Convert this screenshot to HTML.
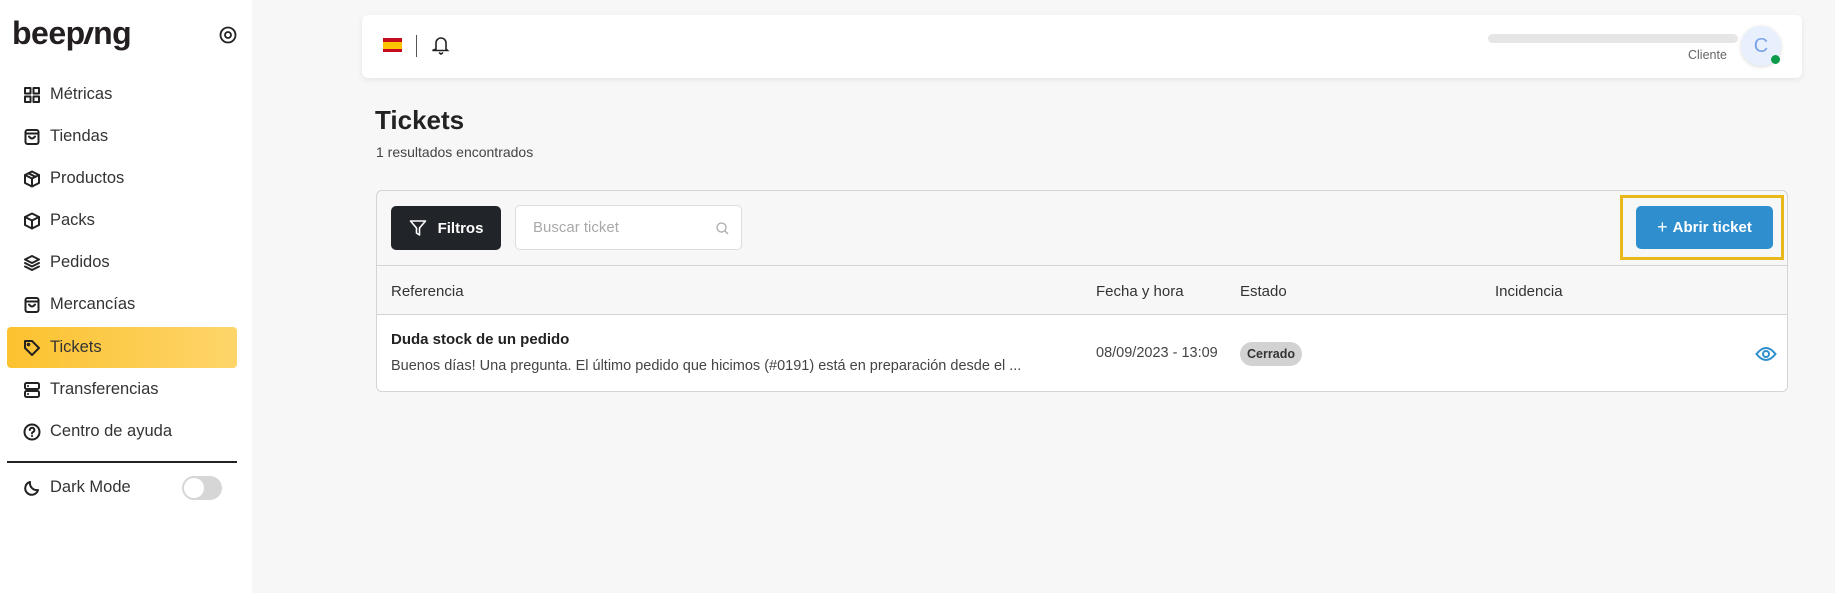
<!DOCTYPE html>
<html><head><meta charset="utf-8"><style>
*{box-sizing:border-box;margin:0;padding:0}
body{width:1835px;height:593px;background:#f7f7f7;font-family:"Liberation Sans",sans-serif;color:#222;position:relative;overflow:hidden}
.sb{position:absolute;left:0;top:0;width:252px;height:593px;background:#fff}
.logo{position:absolute;left:12px;top:15px;font-size:32px;font-weight:bold;color:#231f20;letter-spacing:-0.5px}
.logo i{display:inline-block;transform:skewX(-20deg);font-style:normal}
.item{position:absolute;left:7px;width:230px;height:41px;display:flex;align-items:center;padding-left:16px;font-size:16.5px;color:#333}
.item svg{width:18px;height:18px;margin-right:9px;fill:none;stroke:#222;stroke-width:2;stroke-linecap:round;stroke-linejoin:round}
.act{background:linear-gradient(90deg,#fcc22f,#fdd56a);border-radius:4px}
.hdr{position:absolute;left:362px;top:15px;width:1440px;height:63px;background:#fff;border-radius:6px;box-shadow:0 2px 6px rgba(0,0,0,.08)}
.card{position:absolute;left:376px;top:190px;width:1412px;height:202px;border:1px solid #d4d4d4;border-radius:6px;background:#f7f7f7;overflow:hidden}
.th{position:absolute;top:92px;font-size:15px;color:#333}
</style></head><body>
<div class="sb">
 <div class="logo">beep<i>ı</i>ng</div>
 <svg style="position:absolute;left:219px;top:26px" width="18" height="18" viewBox="0 0 18 18"><circle cx="9" cy="9" r="7.5" fill="none" stroke="#222" stroke-width="1.8"/><circle cx="9" cy="9" r="3" fill="none" stroke="#222" stroke-width="1.8"/></svg>
 <div class="item" style="top:74px"><svg viewBox="0 0 18 18"><rect x="2" y="2" width="5.5" height="5.5"/><rect x="10.5" y="2" width="5.5" height="5.5"/><rect x="2" y="10.5" width="5.5" height="5.5"/><rect x="10.5" y="10.5" width="5.5" height="5.5"/></svg>Métricas</div>
 <div class="item" style="top:116px"><svg viewBox="0 0 18 18"><rect x="2.5" y="2" width="13" height="14" rx="2"/><path d="M2.5 5.5h13M6 8.5q3 4 6 0"/></svg>Tiendas</div>
 <div class="item" style="top:158px"><svg viewBox="0 0 18 18"><path d="M9 1.5l7 3.5v8L9 16.5 2 13V5z"/><path d="M2 5l7 3.5L16 5M9 8.5v8M5.5 3.3l7 3.5"/></svg>Productos</div>
 <div class="item" style="top:200px"><svg viewBox="0 0 18 18"><path d="M9 1.5l7 3.5v8L9 16.5 2 13V5z"/><path d="M2 5l7 3.5L16 5M9 8.5v8"/></svg>Packs</div>
 <div class="item" style="top:242px"><svg viewBox="0 0 18 18"><path d="M9 2l7 3.5-7 3.5-7-3.5z"/><path d="M2 9l7 3.5L16 9M2 12.5L9 16l7-3.5"/></svg>Pedidos</div>
 <div class="item" style="top:284px"><svg viewBox="0 0 18 18"><rect x="2.5" y="2" width="13" height="14" rx="2"/><path d="M2.5 5.5h13M6 8.5q3 4 6 0"/></svg>Mercancías</div>
 <div class="item act" style="top:327px"><svg viewBox="0 0 18 18"><path d="M2 2h7l7 7-7 7-7-7z"/><circle cx="5.5" cy="5.5" r="0.8"/></svg>Tickets</div>
 <div class="item" style="top:369px"><svg viewBox="0 0 18 18"><rect x="2" y="2" width="14" height="6" rx="1.5"/><rect x="2" y="10" width="14" height="6" rx="1.5"/><path d="M5 5h.1M5 13h.1"/></svg>Transferencias</div>
 <div class="item" style="top:411px"><svg viewBox="0 0 18 18"><circle cx="9" cy="9" r="7.5"/><path d="M6.8 7a2.3 2.3 0 1 1 3 2.2c-.6.3-.8.7-.8 1.3M9 13h.1"/></svg>Centro de ayuda</div>
 <div style="position:absolute;left:7px;top:461px;width:230px;height:1.5px;background:#222"></div>
 <div class="item" style="top:467px"><svg viewBox="0 0 18 18"><path d="M15 11A7 7 0 0 1 7 3a6.5 6.5 0 1 0 8 8z"/></svg>Dark Mode</div>
 <div style="position:absolute;left:182px;top:476px;width:40px;height:24px;border-radius:12px;background:#d6d6d6"><div style="position:absolute;left:2px;top:2px;width:20px;height:20px;border-radius:50%;background:#fff"></div></div>
</div>

<div class="hdr">
 <div style="position:absolute;left:21px;top:23px;width:19px;height:14px;background:#c60b1e"><div style="position:absolute;top:3.5px;left:0;width:19px;height:7px;background:#ffc400"></div></div>
 <div style="position:absolute;left:54px;top:20px;width:1px;height:22px;background:#555"></div>
 <svg style="position:absolute;left:70px;top:20px" width="18" height="20" viewBox="0 0 18 20" fill="none" stroke="#222" stroke-width="1.6" stroke-linecap="round"><path d="M4 14V8a5 5 0 0 1 10 0v6l1.5 1.5h-15z"/><path d="M7.5 18l1.5 1 1.5-1"/></svg>
 <div style="position:absolute;left:1126px;top:19px;width:250px;height:9px;border-radius:5px;background:#e6e6e6"></div>
 <div style="position:absolute;left:1326px;top:33px;font-size:12.5px;color:#666">Cliente</div>
 <div style="position:absolute;left:1379px;top:11px;width:40px;height:40px;border-radius:50%;background:#e8f0fd;box-shadow:0 1px 4px rgba(0,0,0,.15);color:#7aa3e8;font-size:20px;text-align:center;line-height:40px">C</div>
 <div style="position:absolute;left:1409px;top:40px;width:9px;height:9px;border-radius:50%;background:#0a9a4a"></div>
</div>

<div style="position:absolute;left:375px;top:105px;font-size:26px;font-weight:bold;color:#222">Tickets</div>
<div style="position:absolute;left:376px;top:144px;font-size:14px;color:#444">1 resultados encontrados</div>

<div class="card">
 <div style="position:absolute;left:14px;top:15px;width:110px;height:44px;background:#212529;border-radius:5px;color:#fff;font-weight:bold;font-size:15px;display:flex;align-items:center;justify-content:center"><svg width="18" height="18" viewBox="0 0 18 18" fill="none" stroke="#fff" stroke-width="1.6" stroke-linejoin="round" style="margin-right:11px"><path d="M1.5 2h15l-6 7v7l-3-2V9z"/></svg>Filtros</div>
 <div style="position:absolute;left:138px;top:14px;width:227px;height:45px;background:#fff;border:1px solid #ddd;border-radius:5px;font-size:15px;color:#aaa;padding:13px 0 0 17px">Buscar ticket
  <svg style="position:absolute;right:12px;top:16px" width="13" height="13" viewBox="0 0 13 13" fill="none" stroke="#aaa" stroke-width="1.3"><circle cx="5.5" cy="5.5" r="4.5"/><path d="M9 9l3 3"/></svg></div>
 <div style="position:absolute;left:1243px;top:4px;width:164px;height:65px;border:3px solid #e8b81c"></div>
 <div style="position:absolute;left:1259px;top:15px;width:137px;height:43px;background:#2f8fce;border-radius:5px;color:#fff;font-weight:bold;font-size:15px;display:flex;align-items:center;justify-content:center"><span style="font-weight:normal;font-size:18px;margin-right:5px">+</span>Abrir ticket</div>
 <div style="position:absolute;left:0;top:74px;width:100%;height:1px;background:#d4d4d4"></div>
 <div class="th" style="left:14px">Referencia</div>
 <div class="th" style="left:719px">Fecha y hora</div>
 <div class="th" style="left:863px">Estado</div>
 <div class="th" style="left:1118px">Incidencia</div>
 <div style="position:absolute;left:0;top:123px;width:100%;height:79px;background:#fff;border-top:1px solid #d4d4d4">
  <div style="position:absolute;left:14px;top:16px;font-size:15px;font-weight:bold;color:#222">Duda stock de un pedido</div>
  <div style="position:absolute;left:14px;top:43px;font-size:14.5px;color:#444;white-space:nowrap;width:690px;overflow:hidden">Buenos días! Una pregunta. El último pedido que hicimos (#0191) está en preparación desde el ...</div>
  <div style="position:absolute;left:719px;top:30px;font-size:14.5px;color:#444">08/09/2023 - 13:09</div>
  <div style="position:absolute;left:863px;top:27px;width:62px;height:24px;border-radius:12px;background:#d2d2d2;font-size:12.5px;font-weight:bold;color:#333;text-align:center;line-height:24px">Cerrado</div>
  <svg style="position:absolute;left:1378px;top:31px" width="22" height="16" viewBox="0 0 22 16" fill="none" stroke="#2f8fce" stroke-width="2"><path d="M1.5 8Q11-4 20.5 8 11 20 1.5 8z"/><circle cx="11" cy="8" r="3"/></svg>
 </div>
</div>
</body></html>
